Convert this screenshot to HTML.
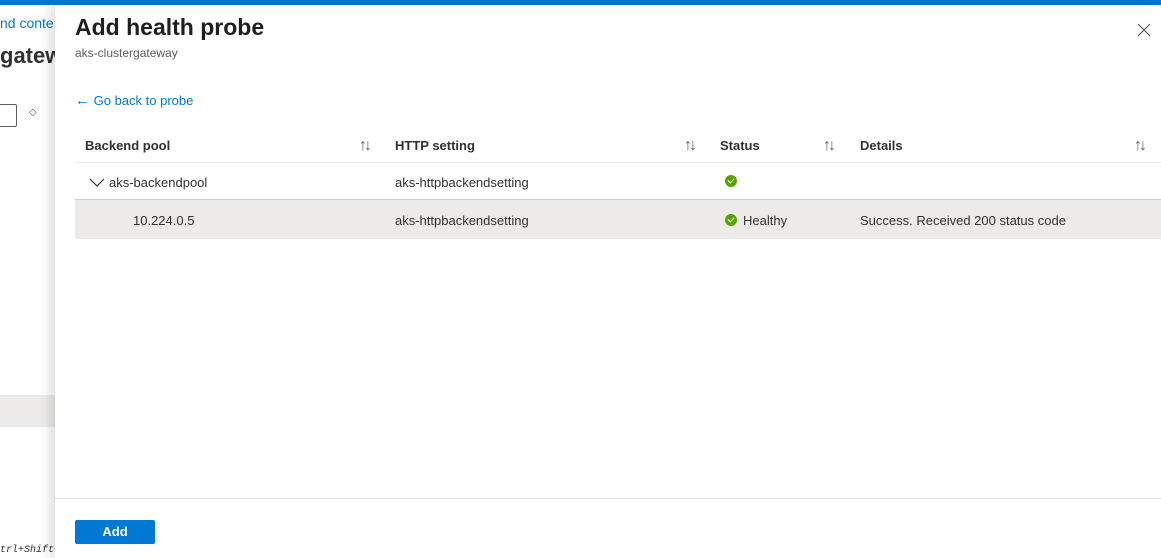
<!DOCTYPE html>
<html><head><style>
*{margin:0;padding:0;box-sizing:border-box}
body{width:1161px;height:558px;overflow:hidden;font-family:"Segoe UI","Liberation Sans",sans-serif;background:#fff;position:relative;color:#323130}
.top{position:absolute;left:0;top:0;width:1161px;height:5px;background:#0078d4}
.l{position:absolute;font-size:14px}
.panel{position:absolute;left:55px;top:5px;width:1106px;height:553px;background:#fff;box-shadow:-6px 0 10px rgba(0,0,0,.12)}
.p{position:absolute}
.hd{font-size:13px;font-weight:600;color:#323130}
.c{font-size:13px;color:#323130}
.sort{font-size:16px;color:#605e5c;letter-spacing:-3px;line-height:16px}
.chk{position:absolute;width:12px;height:12px;border-radius:50%;background:#57a300}
.chk:after{content:"";position:absolute;left:3px;top:2.5px;width:5px;height:3px;border-left:1.6px solid #fff;border-bottom:1.6px solid #fff;transform:rotate(-45deg)}
</style></head><body>
<div class="top"></div>
<div class="l" style="left:0;top:15px;color:#0078d4;font-size:14px">nd conte</div>
<div class="l" style="left:0;top:43px;font-size:22px;font-weight:600;color:#323130">gatew</div>
<div style="position:absolute;left:-2px;top:104px;width:19px;height:23px;border:1px solid #605e5c;border-radius:2px"></div>
<div class="l" style="left:29px;top:107px;font-size:10px;color:#605e5c">◇</div>
<div style="position:absolute;left:0;top:395px;width:55px;height:32px;background:#edebe9"></div>
<div class="l" style="left:0;top:545px;font-size:10px;font-family:'Liberation Mono',monospace;font-style:italic">trl+Shift+</div>
<div class="panel">
 <div class="p" style="left:20px;top:9px;font-size:23px;font-weight:600;color:#201f1e">Add health probe</div>
 <div class="p" style="left:20px;top:41px;font-size:12px;color:#605e5c">aks-clustergateway</div>
 <svg class="p" style="left:1082px;top:18px" width="14" height="14"><path d="M1 1L13 13M13 1L1 13" stroke="#605e5c" stroke-width="1.2"/></svg>
 <div class="p" style="left:20px;top:87px;font-size:13px;color:#0078d4"><span style="font-size:15px">←</span> Go back to probe</div>
 <div class="p hd" style="left:30px;top:133px">Backend pool</div>
 <div class="p sort" style="left:304px;top:133px">↑↓</div>
 <div class="p hd" style="left:340px;top:133px">HTTP setting</div>
 <div class="p sort" style="left:629px;top:133px">↑↓</div>
 <div class="p hd" style="left:665px;top:133px">Status</div>
 <div class="p sort" style="left:768px;top:133px">↑↓</div>
 <div class="p hd" style="left:805px;top:133px">Details</div>
 <div class="p sort" style="left:1079px;top:133px">↑↓</div>
 <div class="p" style="left:20px;top:157px;width:1086px;height:1px;background:#edebe9"></div>
 <svg class="p" style="left:34px;top:173px" width="16" height="10"><path d="M1 1L8 8L15 1" stroke="#323130" stroke-width="1.2" fill="none"/></svg>
 <div class="p c" style="left:54px;top:170px">aks-backendpool</div>
 <div class="p c" style="left:340px;top:170px">aks-httpbackendsetting</div>
 <div class="chk" style="left:670px;top:170px"></div>
 <div class="p" style="left:20px;top:194px;width:1086px;height:40px;background:#edebe9;border-top:1px solid #d2d0ce"></div>
 <div class="p c" style="left:78px;top:208px">10.224.0.5</div>
 <div class="p c" style="left:340px;top:208px">aks-httpbackendsetting</div>
 <div class="chk" style="left:670px;top:209px"></div>
 <div class="p c" style="left:688px;top:208px">Healthy</div>
 <div class="p c" style="left:805px;top:208px">Success. Received 200 status code</div>
 <div class="p" style="left:0;top:493px;width:1106px;height:1px;background:#e1dfdd"></div>
 <div class="p" style="left:20px;top:515px;width:80px;height:24px;background:#0078d4;border-radius:2px;color:#fff;font-size:13px;font-weight:600;text-align:center;line-height:23px">Add</div>
</div>
</body></html>
